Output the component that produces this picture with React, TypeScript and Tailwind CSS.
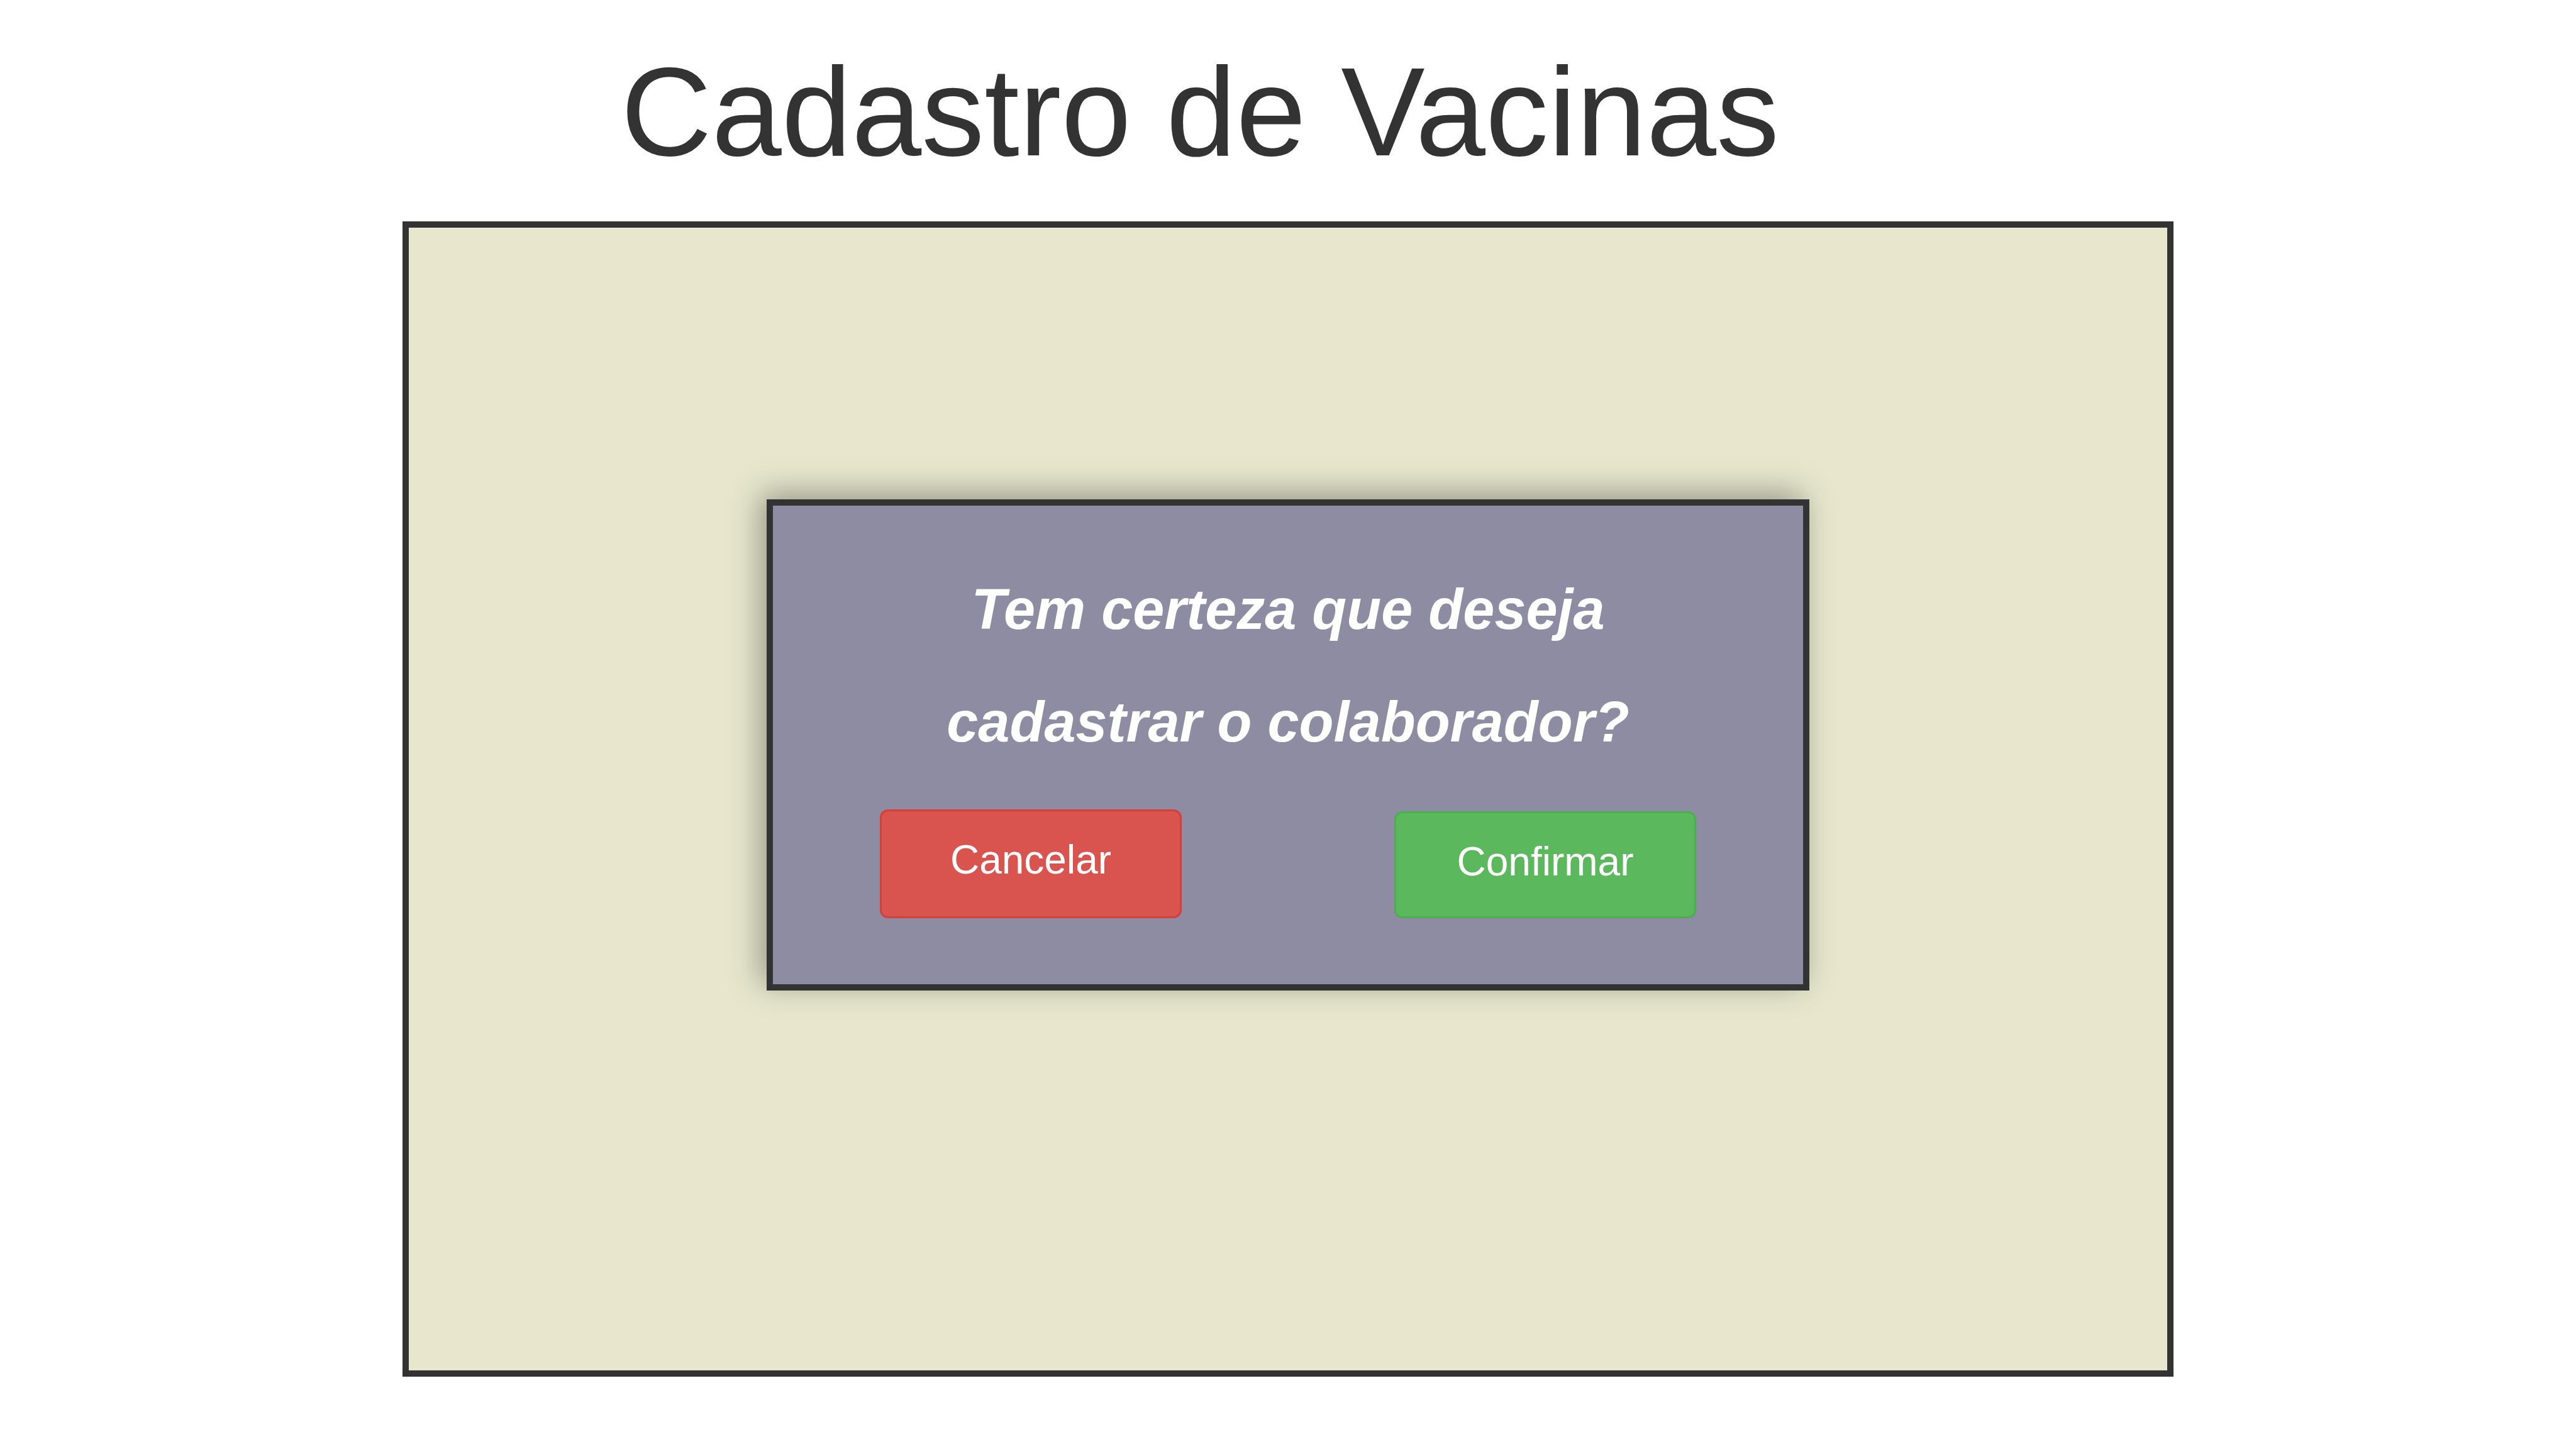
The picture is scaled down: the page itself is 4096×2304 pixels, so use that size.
export default function App() {
  const button =
    "flex w-[480px] items-start justify-center rounded-[13px] border-3 pt-[31px] text-[64px] leading-[92px] text-white";

  return (
    <div className="min-h-screen bg-white font-['Liberation_Sans',Arial,sans-serif] text-[#333333]">
      <header className="px-[24.1%] pt-[62px]">
        <h1 className="text-[200px] leading-[232px] whitespace-nowrap">Cadastro de Vacinas</h1>
      </header>
      <main className="mx-auto mt-[58px] flex h-[1837px] w-[68.75%] items-start justify-center border-10 border-[#333333] bg-[#e8e7ce] pt-[432px]">
        <section
          role="dialog"
          aria-labelledby="question"
          className="w-[59.3%] border-10 border-[#333333] bg-[#8e8ca2] pt-[76px] pb-[105px] shadow-[-10px_-10px_48px_rgba(0,0,0,0.35)]"
        >
          <p
            id="question"
            className="mx-auto max-w-[1200px] text-center text-[90px] leading-[179px] font-bold text-white italic"
          >
            Tem certeza que deseja cadastrar o colaborador?
          </p>
          <div className="mt-[49px] flex items-end justify-between px-[170px]">
            <button type="button" className={`${button} h-[173px] border-[#d43f3a] bg-[#d9534f]`}>
              Cancelar
            </button>
            <button type="button" className={`${button} h-[170px] border-[#4cae4c] bg-[#5cb85c]`}>
              Confirmar
            </button>
          </div>
        </section>
      </main>
    </div>
  );
}
